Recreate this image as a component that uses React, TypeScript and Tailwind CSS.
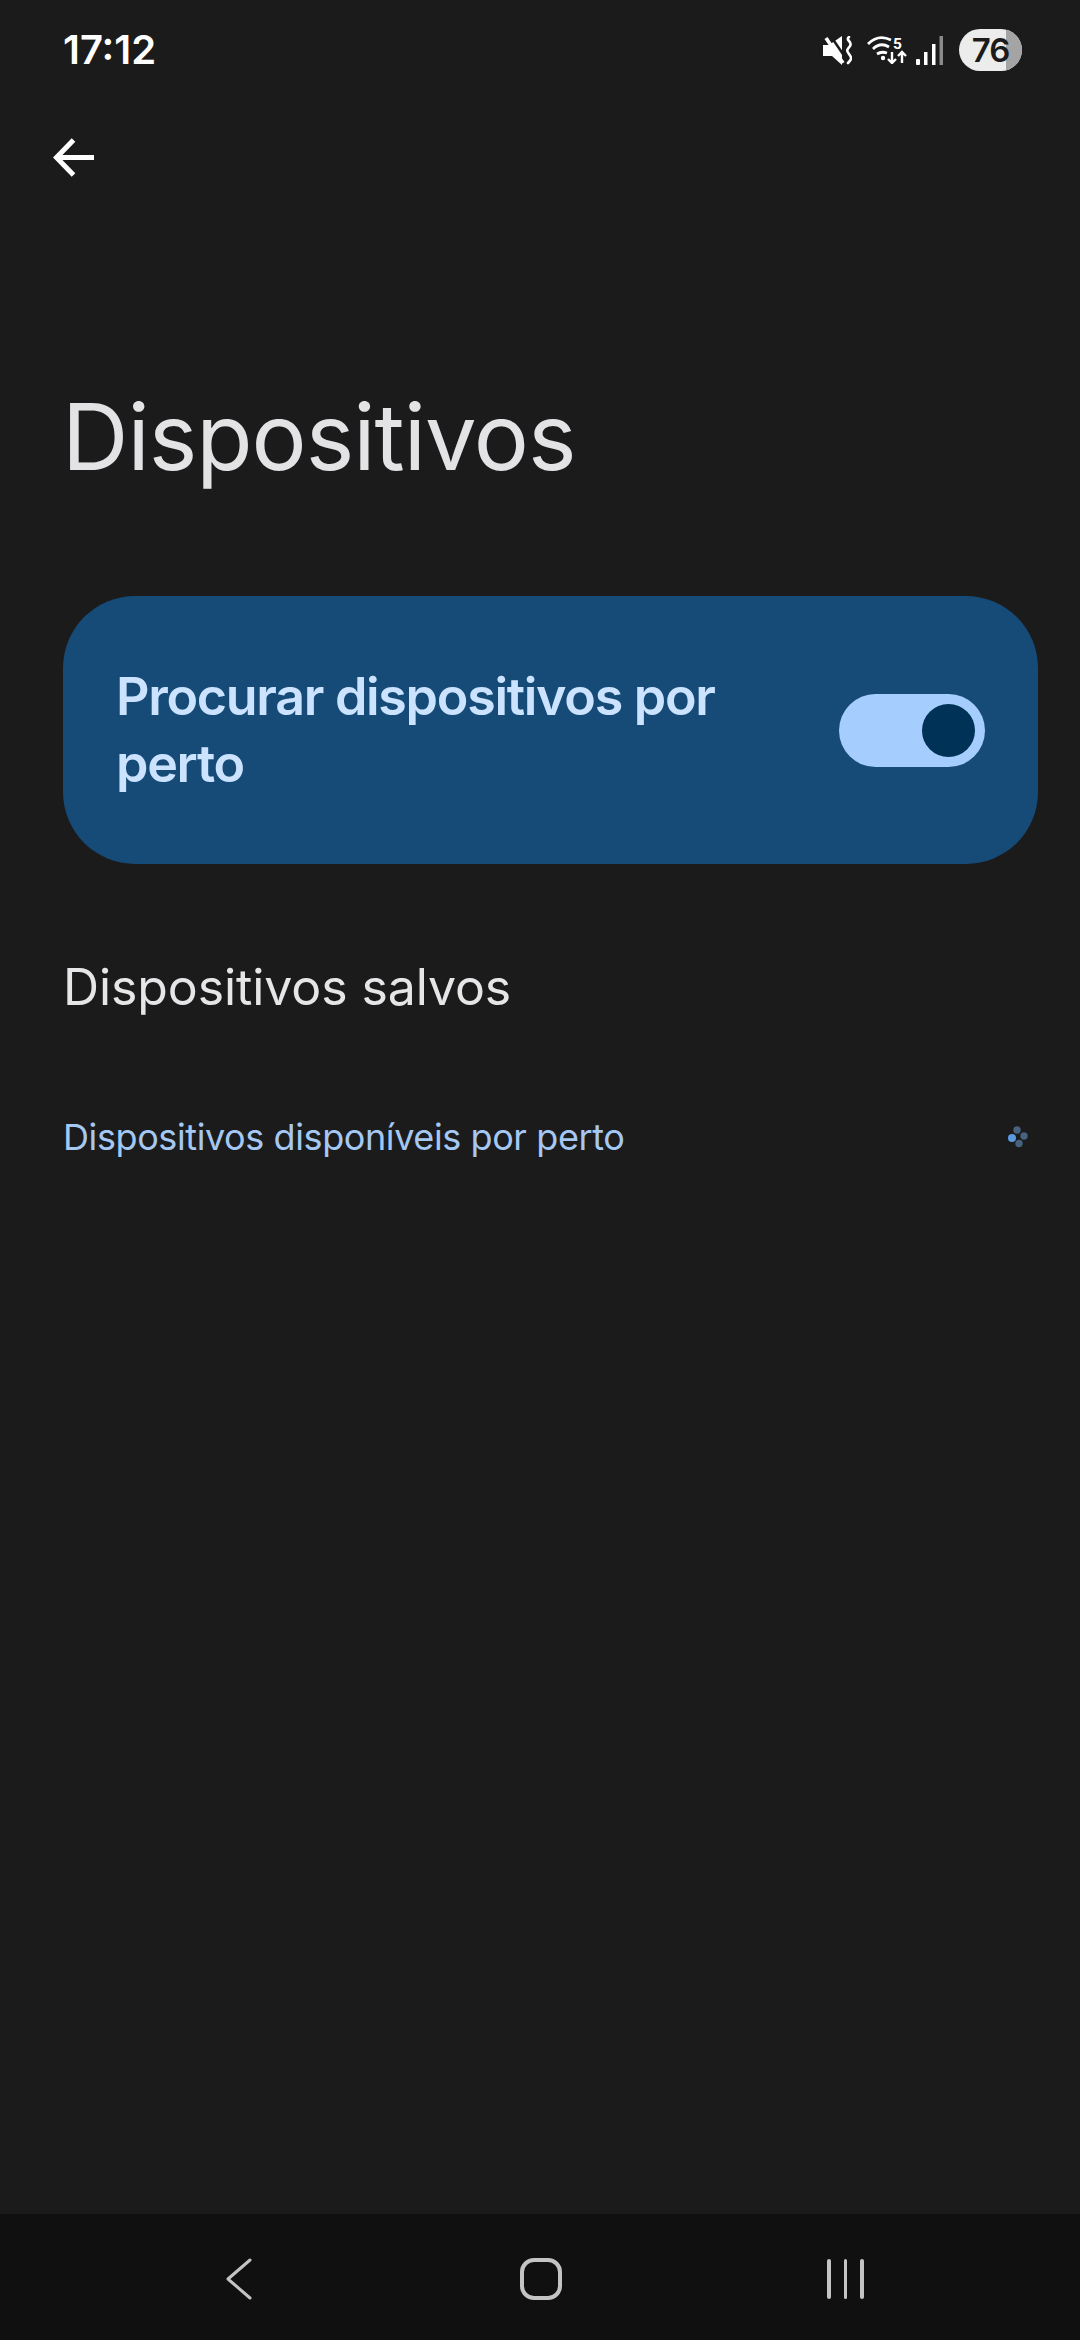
function MuteIcon() {
  return (
    <svg width="29" height="29" viewBox="0 0 29 29" fill="none">
      <path d="M0 9h6L19 0v29L9 20H0z" fill="#fff" />
      <path d="M7 -1l17 25" stroke="#1b1b1b" strokeWidth="2.5" />
      <path d="M3 2l17 25" stroke="#fff" strokeWidth="3.6" />
      <path d="M26 1c-4 3 4 5 1 9s-4 4-1 8 3 5-1 9" stroke="#fff" strokeWidth="2.6" strokeLinecap="round" />
    </svg>
  );
}

function WifiIcon() {
  return (
    <svg width="40" height="28" viewBox="0 0 40 28" fill="none">
      <path d="M1 8c7-7 15-8 23-4" stroke="#fff" strokeWidth="2.8" />
      <path d="M6 13c5-5 11-5 16-2" stroke="#fff" strokeWidth="2.8" />
      <path d="M10 18c3-2 7-2 10-1" stroke="#fff" strokeWidth="2.8" />
      <circle cx="16" cy="22" r="2.2" fill="#fff" />
      <path d="M25 16v11M21 23l4 4 4-4" stroke="#fff" strokeWidth="2.4" />
      <path d="M35 27V16M31 20l4-4 4 4" stroke="#fff" strokeWidth="2.4" />
      <text x="26" y="13" fill="#fff" fontSize="15.5" fontWeight="700" fontFamily="Roboto, sans-serif">5</text>
    </svg>
  );
}

function SignalIcon() {
  return (
    <svg width="27" height="29" viewBox="0 0 27 29" fill="none">
      <rect x="0" y="23" width="4" height="6" rx="1" fill="#fff" />
      <rect x="8" y="16" width="3.5" height="13" fill="#fff" />
      <rect x="16" y="8" width="3.5" height="21" fill="#fff" />
      <rect x="23.5" y="0" width="3.5" height="29" fill="#8a8a8a" />
    </svg>
  );
}

function Spinner() {
  return (
    <svg width="20" height="22" viewBox="0 0 20 22">
      <circle cx="4" cy="12" r="4" fill="#5a9be0" />
      <circle cx="9" cy="4" r="3.7" fill="#46627f" />
      <circle cx="16" cy="10" r="3.7" fill="#46627f" />
      <circle cx="11" cy="17.5" r="3.7" fill="#46627f" />
    </svg>
  );
}

export default function App() {
  return (
    <div className="h-[2340px] w-[1080px] bg-[#1b1b1b] flex flex-col font-['Inter',sans-serif] overflow-hidden">
      {/* Status bar */}
      <div className="flex items-center justify-between pl-[63px] pr-[58px] pt-[26px] h-[74px]">
        <span className="text-[40px] leading-none font-semibold text-white">17:12</span>
        <div className="flex items-center">
          <MuteIcon />
          <div className="ml-[15px]">
            <WifiIcon />
          </div>
          <div className="ml-[9px]">
            <SignalIcon />
          </div>
          <div className="relative ml-[16px] w-[63px] h-[42px] rounded-full overflow-hidden bg-[#ececec] flex items-center justify-center">
            <div className="absolute right-0 top-0 bottom-0 w-[16px] bg-[#a4a4a4]"></div>
            <span className="relative text-[33px] font-semibold tracking-[-1px] text-[#1b1b1b] leading-none">76</span>
          </div>
        </div>
      </div>

      {/* Back */}
      <div className="pl-[53px] pt-[63px]">
        <svg width="42" height="42" viewBox="0 0 42 42" fill="none">
          <path d="M41 20.5H4M20.5 3L3.5 20.5 20.5 38" stroke="#fff" strokeWidth="5" />
        </svg>
      </div>

      {/* Title */}
      <h1 className="ml-[62px] mt-[203px] text-[92px] leading-[110px] tracking-[-1px] text-[#e3e3e6] font-normal">Dispositivos</h1>

      {/* Toggle card */}
      <div className="mt-[104px] ml-[63px] mr-[42px] h-[268px] rounded-[72px] bg-[#164a77] flex items-center justify-between pl-[53px] pr-[53px]">
        <p className="text-[52px] leading-[67px] font-semibold tracking-[-1.3px] text-[#cbe3ff] w-[640px]">Procurar dispositivos por perto</p>
        <div className="w-[146px] h-[73px] rounded-full bg-[#a5cdfd] flex items-center justify-end pr-[10px]">
          <div className="w-[53px] h-[53px] rounded-full bg-[#003258]"></div>
        </div>
      </div>

      <p className="ml-[63px] mt-[93px] text-[50px] leading-[60px] tracking-[-0.1px] text-[#e6e6e8]">Dispositivos salvos</p>

      <div className="mt-[98px] ml-[63px] mr-[52px] flex items-center justify-between">
        <p className="text-[36px] leading-[44px] tracking-[-0.4px] text-[#a5c8f3]">Dispositivos disponíveis por perto</p>
        <Spinner />
      </div>

      {/* Nav bar */}
      <div className="mt-auto h-[126px] bg-[#101010] flex items-center pl-[226px] pt-[4px]">
        <svg width="26" height="42" viewBox="0 0 26 42" fill="none">
          <path d="M24 2L2 21l22 19" stroke="#c4c4c4" strokeWidth="3" strokeLinecap="round" strokeLinejoin="round" />
        </svg>
        <div className="ml-[268px] w-[42px] h-[42px] rounded-[14px] border-[4px] border-[#c4c4c4]"></div>
        <div className="ml-[265px] flex gap-[13px]">
          <div className="w-[3.5px] h-[40px] rounded-full bg-[#c4c4c4]"></div>
          <div className="w-[3.5px] h-[40px] rounded-full bg-[#c4c4c4]"></div>
          <div className="w-[3.5px] h-[40px] rounded-full bg-[#c4c4c4]"></div>
        </div>
      </div>
    </div>
  );
}
